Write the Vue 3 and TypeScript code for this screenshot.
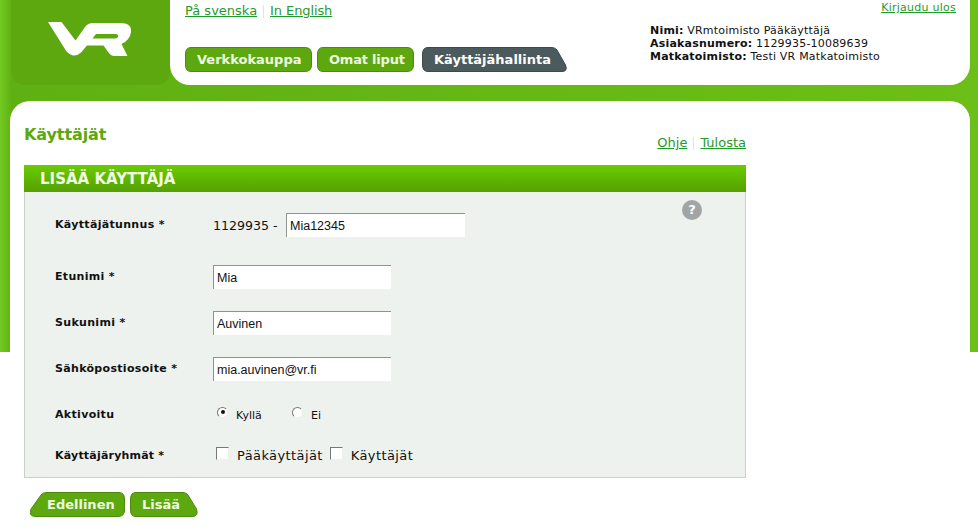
<script setup lang="ts">
const rows = [
  { label: 'Etunimi *', value: 'Mia' },
  { label: 'Sukunimi *', value: 'Auvinen' },
  { label: 'Sähköpostiosoite *', value: 'mia.auvinen@vr.fi' },
]
</script>

<template>
  <div class="page">
    <header class="top">
      <a class="logo" aria-label="VR">
        <svg width="159" height="85" viewBox="11 0 159 85">
          <path fill="#fff" d="M48 22H61.500L75.500 40.500L85 27Q88 23 93 23H120Q132 23 131 32Q130 40 121.500 44L127.500 56H113.500Q111 56 108.500 52.500L103.500 45.500H87L81 52.500Q77.500 56 73 55.500Q69.500 55 66.500 51.500Z" />
          <path fill="#5ca80e" d="M92.500 38.500L96 34H115.500Q118.500 34 118 36.500Q117.500 38.500 114 38.500Z" />
        </svg>
      </a>
      <div class="head">
        <div class="head-left">
          <div class="links lang">
            <a>På svenska</a><span class="sep"></span><a>In English</a>
          </div>
          <nav class="nav">
            <span class="btn w127">
              <svg viewBox="0 0 127 25" width="127" height="25"><path class="shape" d="M6 .5H120Q126.500 .5 126.500 7V18Q126.500 24.500 120 24.500H6Q.5 24.500 .5 18V7Q.5 .5 6 .5Z" /></svg>
              <b>Verkkokauppa</b>
            </span>
            <span class="btn w97">
              <svg viewBox="0 0 97 25" width="97" height="25"><path class="shape" d="M6 .5H90Q96.500 .5 96.500 7V18Q96.500 24.500 90 24.500H6Q.5 24.500 .5 18V7Q.5 .5 6 .5Z" /></svg>
              <b>Omat liput</b>
            </span>
            <span class="btn w145 dark">
              <svg viewBox="0 0 145 25" width="145" height="25"><path class="shape" d="M6 .5H130Q133 .5 135 3L143.500 18Q146 24.500 140 24.500H6Q.5 24.500 .5 18V7Q.5 .5 6 .5Z" /></svg>
              <b>Käyttäjähallinta</b>
            </span>
          </nav>
        </div>
        <div class="head-right">
          <a class="logout">Kirjaudu ulos</a>
          <div class="info">
            <div><b>Nimi:</b> VRmtoimisto Pääkäyttäjä</div>
            <div><b>Asiakasnumero:</b> 1129935-10089639</div>
            <div><b>Matkatoimisto:</b> Testi VR Matkatoimisto</div>
          </div>
        </div>
      </div>
    </header>

    <main class="main">
      <div class="content">
        <div class="title-row">
          <h1>Käyttäjät</h1>
          <div class="links tools"><a>Ohje</a><span class="sep"></span><a>Tulosta</a></div>
        </div>

        <section class="panel">
          <h2>LISÄÄ KÄYTTÄJÄ</h2>
          <div class="body">
            <span class="help">?</span>
            <div class="row first">
              <label>Käyttäjätunnus *</label>
              <span class="prefix">1129935 -</span>
              <input class="wide" value="Mia12345" />
            </div>
            <div v-for="r in rows" :key="r.label" class="row">
              <label>{{ r.label }}</label>
              <input :value="r.value" />
            </div>
            <div class="row radios">
              <label>Aktivoitu</label>
              <span class="radio on"></span><span class="small r1">Kyllä</span>
              <span class="radio r2"></span><span class="small">Ei</span>
            </div>
            <div class="row checks">
              <label class="low">Käyttäjäryhmät *</label>
              <span class="check"></span><span class="c1">Pääkäyttäjät</span>
              <span class="check c2"></span><span class="c3">Käyttäjät</span>
            </div>
          </div>
        </section>

        <div class="actions">
          <span class="btn">
            <svg viewBox="0 0 96 25" width="96" height="25"><path class="shape" d="M1 17L11 3Q13 .5 16 .5H89Q94.500 .5 94.500 7V18Q94.500 24.500 88 24.500H6Q-2 24.500 1 17Z" /></svg>
            <b class="a1">Edellinen</b>
          </span>
          <span class="btn">
            <svg viewBox="0 0 68 25" width="68" height="25"><path class="shape" d="M6 .5H53Q56 .5 58 3L66.500 17Q69 24.500 62 24.500H6Q.5 24.500 .5 18V7Q.5 .5 6 .5Z" /></svg>
            <b class="a2">Lisää</b>
          </span>
        </div>
      </div>
    </main>
  </div>
</template>

<style>
html, body { margin: 0; background: #fff; }
</style>

<style scoped>
.page {
  width: 978px;
  height: 527px;
  overflow: hidden;
  padding: 0 8px 0 10px;
  box-sizing: border-box;
  font-family: "DejaVu Sans", Verdana, sans-serif;
  color: #111;
  background: linear-gradient(90deg, #74c922 0, #5fb012 12px, #6cbf17 100%) 0 0 / 100% 352px no-repeat #fff;
}
.top { display: flex; height: 85px; }
.logo {
  display: block;
  width: 159px;
  height: 85px;
  margin-left: 1px;
  background: #5ca80e;
  border-radius: 0 0 14px 14px;
}
.logo svg { display: block; }
.head {
  flex: 1;
  display: flex;
  justify-content: space-between;
  background: #fff;
  border-radius: 0 0 20px 20px;
  padding-left: 15px;
}
.head-left { display: flex; flex-direction: column; }
.links { display: flex; align-items: center; font-size: 13px; line-height: 16px; }
.links a { color: #1f9b2b; text-decoration: underline; }
.sep { width: 1px; height: 13px; background: #dfe4df; margin: 0 6px; }
.lang { margin-top: 3px; }
.lang a:last-child { letter-spacing: -.1px; }
.nav { display: flex; margin-top: 28px; }
.btn {
  position: relative;
  display: flex;
  align-items: center;
  height: 25px;
  font-size: 13px;
  color: #eef9e0;
}
.btn svg { position: absolute; left: 0; top: 0; }
.btn b { position: relative; font-weight: 700; white-space: nowrap; }
.shape { fill: #5ca80e; stroke: #4b8c0b; stroke-width: 1; }
.dark .shape { fill: #4b5a5c; stroke: #3d4a4c; }
.dark { color: #fff; }
.w127 { width: 127px; padding-left: 12px; box-sizing: border-box; margin-right: 5px; }
.w97 { width: 97px; padding-left: 12px; box-sizing: border-box; margin-right: 8px; letter-spacing: -.2px; }
.w145 { width: 145px; padding-left: 12px; box-sizing: border-box; }
.head-right { width: 320px; position: relative; }
.logout {
  display: block;
  text-align: right;
  font-size: 11px;
  line-height: 14px;
  letter-spacing: .25px;
  color: #1f9b2b;
  text-decoration: underline;
  margin-right: 14px;
  padding-top: 1px;
}
.info { margin-top: 9px; font-size: 11px; line-height: 13px; letter-spacing: .2px; white-space: nowrap; }
.main {
  margin-top: 16px;
  width: 960px;
  background: #fff;
  border-radius: 20px 20px 0 0;
  height: 426px;
}
.content { width: 722px; margin-left: 14px; }
.title-row { display: flex; justify-content: space-between; height: 64px; box-sizing: border-box; padding-top: 24px; }
h1 { margin: 0; font-size: 16px; line-height: 20px; color: #5ca80e; font-weight: 700; letter-spacing: -.1px; }
.tools { margin-top: 10px; height: 16px; }
.panel { border: 1px solid #c9cfc9; border-top: 0; background: #eef2ee; height: 313px; box-sizing: border-box; }
h2 {
  margin: 0 -1px;
  height: 27px;
  line-height: 29px;
  padding-left: 16px;
  font-size: 15px;
  font-weight: 700;
  color: #f2fbe4;
  background: linear-gradient(#6acc00, #55a000);
}
.body { position: relative; padding-top: 21px; }
.help {
  position: absolute;
  right: 43px;
  top: 8px;
  width: 20px;
  height: 20px;
  border-radius: 50%;
  background: #a0a5a6;
  color: #fff;
  font-size: 13px;
  font-weight: 700;
  line-height: 20px;
  text-align: center;
}
.row { display: flex; align-items: center; height: 24px; padding-left: 30px; margin-bottom: 22px; font-size: 13px; }
.row.first { margin-bottom: 28px; }
label { width: 158px; flex: none; font-size: 11px; font-weight: 700; letter-spacing: .32px; white-space: nowrap; position: relative; top: -1px; }
label.low { top: 0; letter-spacing: .2px; }
.prefix { width: 73px; font-size: 12.6px; }
input {
  width: 178px;
  height: 24px;
  box-sizing: border-box;
  border: 0;
  border-top: 1px solid #8f9490;
  border-left: 1px solid #8f9490;
  padding: 0 3px;
  background: #fff;
  font-family: "Liberation Sans", Arial, sans-serif;
  font-size: 12.5px;
  color: #111;
  outline: none;
}
input.wide { width: 179px; }
.radios { margin-bottom: 16px; }
.checks { margin-bottom: 0; letter-spacing: .4px; }
.radio {
  width: 11px;
  height: 11px;
  flex: none;
  border-radius: 50%;
  background: #fff;
  border: 1px solid;
  border-color: #777 #eee #eee #777;
  box-sizing: border-box;
  margin: -6px 8px 0 4px;
  position: relative;
}
.radio.on::after {
  content: "";
  position: absolute;
  left: 2.5px;
  top: 2.5px;
  width: 4px;
  height: 4px;
  border-radius: 50%;
  background: #111;
}
.small { font-size: 11px; }
.r1 { width: 44px; }
.r2 { margin-left: 12px; }
.check {
  width: 11px;
  height: 11px;
  flex: none;
  background: #fff;
  border: 1px solid;
  border-color: #777 #eee #eee #777;
  margin: -4px 8px 0 3px;
}
.c1 { margin-right: 4px; }
.c2 { margin-left: 3px; margin-right: 8px; }
.actions { display: flex; gap: 4px; margin-top: 14px; margin-left: 6px; }
.a1 { margin-left: 17px; }
.a2 { margin-left: 12px; }
.actions .btn:first-child { width: 96px; }
.actions .btn:last-child { width: 68px; }
</style>
